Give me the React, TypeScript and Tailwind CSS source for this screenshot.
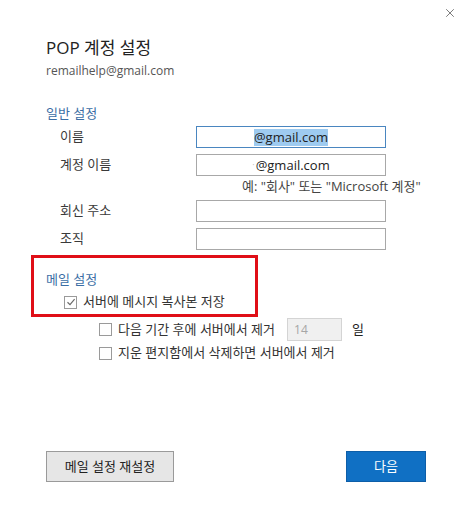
import { X } from "lucide-react";

const font = { fontFamily: '"Open Sans", "Noto Sans CJK KR", sans-serif' };

function Field({ label, value, focused, hint }: { label: string; value?: string; focused?: boolean; hint?: boolean }) {
  return (
    <div className="flex items-center h-[22px]">
      <span className="w-[150px] pl-[14px] text-[13px] text-[#3a3a3a]">{label}</span>
      <div
        className={`w-[190px] h-[22px] border flex items-center justify-center text-[13px] text-[#222] ${
          focused ? "border-[#4a86c0]" : "border-[#a8a8a8]"
        }`}
      >
        {hint && <span className="text-[#bbb] text-[9px] mr-[1px]">·</span>}
        {value && <span className={focused ? "bg-[#9ecbf0] leading-[17px]" : "leading-[17px]"}>{value}</span>}
      </div>
    </div>
  );
}

function Check({ checked, children }: { checked?: boolean; children: React.ReactNode }) {
  return (
    <div className="flex items-center gap-[6px]">
      <span className="w-[13px] h-[13px] border border-[#9a9a9a] bg-white flex items-center justify-center">
        {checked && (
          <svg width="10" height="10" viewBox="0 0 10 10">
            <path d="M1.5 5.2 L4 7.6 L8.6 2.2" fill="none" stroke="#6b6b6b" strokeWidth="1.2" />
          </svg>
        )}
      </span>
      <span className="text-[13px] text-[#333]">{children}</span>
    </div>
  );
}

export default function App() {
  return (
    <div className="relative w-[473px] h-[528px] bg-white overflow-hidden" style={font}>
      {/* close */}
      <X size={14} strokeWidth={1.2} className="absolute left-[443px] top-[6px] text-[#444]" />

      {/* red highlight */}
      <div className="absolute left-[31px] top-[255px] w-[227px] h-[62px] border-[3px] border-[#e00f17]" />

      <div className="pl-[46px] pt-[38px] flex flex-col">
        <h1 className="text-[17px] leading-[20px] text-[#222]">POP 계정 설정</h1>
        <p className="mt-[5px] text-[12px] leading-[16px] text-[#555]">remailhelp@gmail.com</p>

        <p className="mt-[26px] text-[13px] leading-[16px] text-[#3b6ea5]">일반 설정</p>
        <div className="mt-[5px] flex flex-col gap-[6px]">
          <Field label="이름" value="@gmail.com" focused />
          <Field label="계정 이름" value="@gmail.com" hint />
        </div>
        <p className="ml-[196px] mt-[2px] text-[13px] leading-[16px] text-[#444]">예: "회사" 또는 "Microsoft 계정"</p>
        <div className="mt-[6px] flex flex-col gap-[6px]">
          <Field label="회신 주소" />
          <Field label="조직" />
        </div>

        <p className="mt-[21px] text-[13px] leading-[16px] text-[#3b6ea5]">메일 설정</p>
        <div className="mt-[7px] ml-[18px] h-[16px] flex items-center">
          <Check checked>서버에 메시지 복사본 저장</Check>
        </div>
        <div className="mt-[8px] ml-[53px] h-[23px] flex items-center">
          <Check>다음 기간 후에 서버에서 제거</Check>
          <div className="ml-[12px] w-[55px] h-[23px] border border-[#d4d4d4] bg-[#f0f0f0] flex items-center pl-[6px] text-[12px] text-[#a6a6a6]">
            14
          </div>
          <span className="ml-[10px] text-[13px] text-[#222]">일</span>
        </div>
        <div className="mt-[4px] ml-[53px] h-[16px] flex items-center">
          <Check>지운 편지함에서 삭제하면 서버에서 제거</Check>
        </div>

        <div className="mt-[90px] flex items-center">
          <button className="w-[128px] h-[31px] border border-[#9a9a9a] bg-[#e6e6e6] text-[13px] text-[#222]">
            메일 설정 재설정
          </button>
          <button className="ml-[172px] w-[80px] h-[31px] border border-[#0d5ea8] bg-[#1070c4] text-[13px] text-white">
            다음
          </button>
        </div>
      </div>
    </div>
  );
}
